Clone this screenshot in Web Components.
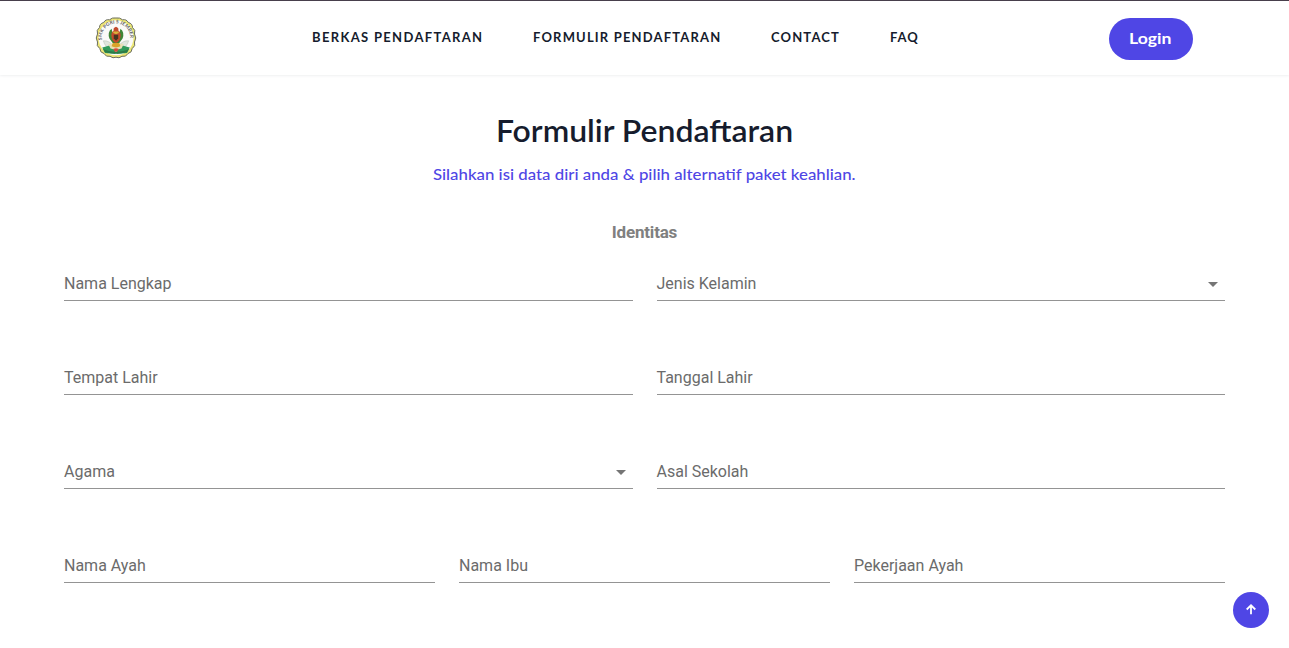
<!DOCTYPE html>
<html lang="id"><head><meta charset="utf-8"><title>Formulir Pendaftaran</title>
<style>
body{margin:0;background:#fff;height:648px;overflow:hidden;font-family:Lato,"Open Sans",sans-serif}
</style></head><body>
<registration-page></registration-page>
<script>
const define=(name,html)=>customElements.define(name,class extends HTMLElement{
  constructor(){
    super();
    const t=document.createElement('template');
    t.innerHTML=html;
    this.attachShadow({mode:'open'}).appendChild(t.content.cloneNode(true));
  }
});

define('school-logo',`<style>:host{display:block;width:42px;height:42px}svg{display:block}</style>
<svg width="42" height="42" viewBox="0 0 42 42">
<path d="M21 1Q25 .3 27.500 2.800Q31.500 2 33.300 5.500Q37.500 6.500 37.500 10.500Q41 13 39.500 17Q42 21 39.500 25Q41 29 37.200 31.500Q37 35.700 33 36.500Q31 40.300 27 39.300Q24 41.800 21 40.200Q18 41.800 15 39.300Q11 40.300 9 36.500Q5 35.700 4.800 31.500Q1 29 2.500 25Q0 21 2.500 17Q1 13 4.500 10.500Q4.500 6.500 8.700 5.500Q10.500 2 14.500 2.800Q17 .3 21 1Z" fill="#ece674" stroke="#6b6e62" stroke-width="1"/>
<circle cx="21" cy="20.800" r="17.500" fill="#fafaf8"/>
<path id="arc" d="M7 23A14.200 14.200 0 1 1 35 23" fill="none"/>
<text font-family="Lato,sans-serif" font-size="4.800" font-weight="700" fill="#5c5d63"><textPath href="#arc" textLength="47">SMK PGRI 5 JEMBER</textPath></text>
<g transform="translate(-2.100 -2.600) scale(1.100)">
<path d="M9.500 24Q15 23.500 19 29L17 32Q11 30 9.500 24ZM32.500 24Q27 23.500 23 29L25 32Q31 30 32.500 24Z" fill="#dfe6dd" stroke="#a9b7aa" stroke-width=".4"/>
<path d="M8.500 30L16 28L20.500 32V36L11 35ZM33.500 30L26 28L21.500 32V36L31 35Z" fill="#319b5b"/>
<path d="M9 31.500Q21 37 33 31.500L31 34.500Q21 37 11 34.500Z" fill="#2d7b47"/>
<path d="M14 27Q18 26 21 29Q24 26 28 27L26 31Q21 33 16 31Z" fill="#e9dfb6"/>
<path d="M17 13Q13 16 15 22L18 26H24L27 22Q29 16 25 13L24 18H18Z" fill="#3f8536"/>
<path d="M21 11.200Q24 12.500 23 14.500Q26 17 25 21Q24 25 21 26Q18 25 17 21Q16 17 19 14.500Q18 12.500 21 11.200Z" fill="#c24a2d"/>
<path d="M18.500 15.500H23.500V17L21 18L18.500 17Z" fill="#d9b33a"/>
<path d="M19 18.500H23V22L21 24L19 22Z" fill="#423521"/><path d="M18 26H24L25 29Q21 31 17 29Z" fill="#d9a329"/>
<path d="M18.500 31.500Q21 30 23.500 31.500L22 34H20Z" fill="#d64c3e"/>
</g>
</svg>`);

define('nav-link',`<style>:host{display:block;white-space:nowrap;font-size:13px;line-height:18px;font-weight:700;color:#161c2d;letter-spacing:var(--ls,1px)}</style><slot></slot>`);

define('pill-button',`<style>:host{display:flex;box-sizing:border-box;width:84px;height:42px;padding:0 1px 3px 0;border-radius:21px;background:#4f46e5;color:#fff;align-items:center;justify-content:center;font-size:16px;font-weight:700}span{display:inline-block;transform:scaleX(1.1)}</style><span><slot></slot></span>`);

define('top-bar',`<style>
:host{display:flex;box-sizing:border-box;height:75px;border-top:1px solid #483f4c;padding:16px 96px 0 95px;box-shadow:0 0 3px rgba(60,72,88,.15);background:#fff;align-items:flex-start}
nav{display:flex;margin:11px 0 0 175px;flex:1}
nav-link{box-sizing:border-box}
.a{width:221px;--ls:1.330px}.b{width:238px;--ls:1.170px}.c{width:119px;--ls:1.150px}
pill-button{margin-top:1px}
</style><school-logo></school-logo><nav><nav-link class="a">BERKAS PENDAFTARAN</nav-link><nav-link class="b">FORMULIR PENDAFTARAN</nav-link><nav-link class="c">CONTACT</nav-link><nav-link>FAQ</nav-link></nav><pill-button>Login</pill-button>`);

define('page-heading',`<style>
:host{display:block;text-align:center;padding-top:33px}
h1{margin:0;font-size:30px;line-height:45px;font-weight:600;color:#161c2d}
p{margin:9px 0 0;font-size:16px;line-height:24px;font-weight:500;color:#4f46e5}
h1 span,p span{display:inline-block}
h1 span{transform:scaleX(1.065)}
p span{transform:scaleX(1.05)}
h2{margin:33px 0 0;font:700 17px/26px Roboto,sans-serif;letter-spacing:-.2px;color:#808080}
</style><h1><span>Formulir Pendaftaran</span></h1><p><span>Silahkan isi data diri anda &amp; pilih alternatif paket keahlian.</span></p><h2><span>Identitas</span></h2>`);

define('form-field',`<style>
:host{display:flex;box-sizing:border-box;height:35px;border-bottom:1px solid #949494;padding:2px 7px 0 0;align-items:center;justify-content:space-between;font:400 16px/24px Roboto,sans-serif;color:#6b6b6b}
svg{display:none}:host([select]) svg{display:block}
</style><span><slot></slot></span><svg width="10" height="5" viewBox="0 0 10 5"><path d="M0 0H10L5 5Z" fill="#757575"/></svg>`);

define('field-row',`<style>:host{display:grid;grid-template-columns:repeat(var(--cols,2),1fr);column-gap:24px;height:94px;align-items:start}</style><slot></slot>`);

define('scroll-top',`<style>:host{position:absolute;right:20px;bottom:20px;width:36px;height:36px;border-radius:50%;background:#4f46e5;display:flex;align-items:center;justify-content:center}</style>
<svg width="12" height="12" viewBox="0 0 12 12" fill="none" stroke="#fff" stroke-width="1.800"><path d="M6 10.200V1.500M1.700 5.500L6 1.300L10.300 5.500"/></svg>`);

define('registration-page',`<style>
:host{display:block;position:relative;height:648px;overflow:hidden}
main{padding:0 64px}form{display:block;margin-top:21px}
.three{--cols:3}
</style><top-bar></top-bar><main><page-heading></page-heading><form>
<field-row><form-field>Nama Lengkap</form-field><form-field select>Jenis Kelamin</form-field></field-row>
<field-row><form-field>Tempat Lahir</form-field><form-field>Tanggal Lahir</form-field></field-row>
<field-row><form-field select>Agama</form-field><form-field>Asal Sekolah</form-field></field-row>
<field-row class="three"><form-field>Nama Ayah</form-field><form-field>Nama Ibu</form-field><form-field>Pekerjaan Ayah</form-field></field-row>
</form></main><scroll-top></scroll-top>`);
</script></body></html>
